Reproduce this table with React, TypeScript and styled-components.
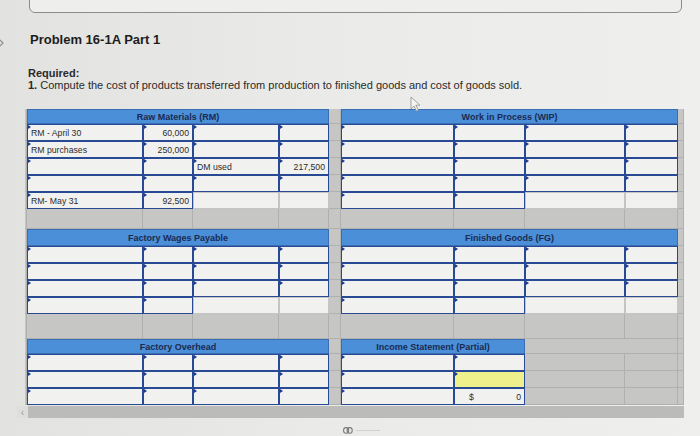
import styled, { createGlobalStyle } from 'styled-components'

const GlobalStyle = createGlobalStyle`
  html, body { margin: 0; padding: 0; }
  body {
    background: #e9e9e7;
    font-family: 'Liberation Sans', Arial, sans-serif;
  }
`

const Page = styled.div`
  position: relative;
  width: 700px;
  height: 436px;
  overflow: hidden;
  display: flex;
  flex-direction: column;
  background: linear-gradient(90deg, #e2e2e0 0%, #eaeae8 45%, #efefed 100%);
`

const TopCard = styled.div`
  margin: -20px 18px 0 29px;
  height: 31px;
  border: 1px solid #8c8c8a;
  border-radius: 0 0 6px 6px;
  background: #eeeeec;
`

const Title = styled.h1`
  margin: 19px 0 0 30px;
  font-size: 13px;
  line-height: 16px;
  font-weight: 700;
  color: #1d1d1d;
`

const Prompt = styled.div`
  margin: 19px 0 0 28px;
  font-size: 11px;
  line-height: 12px;
  color: #2a2a2a;
  b { font-weight: 700; }
`

const Sheet = styled.div`
  margin: 18px 0 0 25px;
  width: 659px;
  display: flex;
  flex-direction: column;
`

const Row = styled.div<{ $h: number }>`
  display: grid;
  grid-template-columns: 2px 116px 50px 86px 50px 12px 113px 71px 100px 53px 6px;
  height: ${p => p.$h}px;
`

const Gray = styled.div<{ $span?: number }>`
  grid-column: span ${p => p.$span ?? 1};
  background: #c6c6c4;
  border-right: 1px solid #b0b0ae;
  border-bottom: 1px solid #b0b0ae;
  box-sizing: border-box;
`

const Head = styled.div<{ $span: number }>`
  grid-column: span ${p => p.$span};
  background: #4b8fd8;
  border: 1px solid #3a6db3;
  box-sizing: border-box;
  display: flex;
  align-items: center;
  justify-content: center;
  font-size: 9px;
  font-weight: 700;
  color: #1a2a50;
`

const Cell = styled.div<{ $kind: string; $num?: boolean }>`
  position: relative;
  box-sizing: border-box;
  display: flex;
  align-items: center;
  justify-content: ${p => (p.$num ? 'flex-end' : 'space-between')};
  padding: 0 3px;
  font-size: 8.7px;
  color: #2c2c2c;
  background: ${p => (p.$kind === 'yellow' ? '#eef08c' : '#f1f1ef')};
  border: 1px solid ${p => (p.$kind === 'plain' ? '#c4c4c2' : '#284a95')};
  ${p => (p.$kind === 'in' || p.$kind === 'yellow') && `
    &::before {
      content: '';
      position: absolute;
      left: 0;
      top: 0;
      border-top: 2px solid transparent;
      border-bottom: 2px solid transparent;
      border-left: 3px solid #1c3b8c;
    }
  `}
`

const Dollar = styled.span`
  margin-left: 11px;
`

const ScrollBar = styled.div`
  display: flex;
  height: 12px;
  margin: 1px 0 0 17px;
  width: 667px;
`

const ScrollBtn = styled.div`
  width: 11px;
  display: flex;
  align-items: center;
  justify-content: center;
  background: #dededc;
  color: #9a9a98;
  font-size: 10px;
`

const Track = styled.div`
  flex: 1;
  background: #bbbbb9;
`

const Footer = styled.div`
  display: flex;
  align-items: center;
  gap: 3px;
  margin: 9px 0 0 343px;
`

const FooterLine = styled.div`
  width: 24px;
  height: 1px;
  background: #d2d2d0;
`

const Cursor = styled.svg`
  position: absolute;
  left: 410px;
  top: 96px;
`

const EdgeMark = styled.svg`
  position: absolute;
  left: -2px;
  top: 38px;
`

type Spec = { k: 'in' | 'plain' | 'gray' | 'yellow' | 'sum'; t?: string }
const I = (t?: string): Spec => ({ k: 'in', t })
const P: Spec = { k: 'plain' }
const G: Spec = { k: 'gray' }

const full = [I(), I(), I(), I()]
const lastRow = [I(), I(), P, P]

function Cells({ list }: { list: Spec[] }) {
  return (
    <>
      {list.map((c, i) => {
        if (c.k === 'gray') return <Gray key={i} />
        if (c.k === 'sum')
          return (
            <Cell key={i} $kind="sum">
              <Dollar>$</Dollar>
              <span>0</span>
            </Cell>
          )
        return (
          <Cell key={i} $kind={c.k} $num={i % 2 === 1}>
            {c.t}
          </Cell>
        )
      })}
    </>
  )
}

function HeadRow({ left, right, rightSpan = 4, h }: { left: string; right: string; rightSpan?: number; h: number }) {
  return (
    <Row $h={h}>
      <Gray />
      <Head $span={4}>{left}</Head>
      <Gray />
      <Head $span={rightSpan}>{right}</Head>
      {rightSpan < 4 && <Gray $span={4 - rightSpan} />}
      <Gray />
    </Row>
  )
}

function DataRow({ left, right }: { left: Spec[]; right: Spec[] }) {
  return (
    <Row $h={17}>
      <Gray />
      <Cells list={left} />
      <Gray />
      <Cells list={right} />
      <Gray />
    </Row>
  )
}

function Spacer({ h }: { h: number }) {
  return (
    <Row $h={h}>
      {Array.from({ length: 11 }).map((_, i) => (
        <Gray key={i} />
      ))}
    </Row>
  )
}

export default function App() {
  return (
    <Page>
      <GlobalStyle />
      <EdgeMark width="7" height="10" viewBox="0 0 7 10">
        <path d="M1 1 L5 5 L1 9" fill="none" stroke="#8a8a88" strokeWidth="1.2" />
      </EdgeMark>
      <TopCard />
      <Title>Problem 16-1A Part 1</Title>
      <Prompt>
        <b>Required:</b>
        <div>
          <b>1.</b> Compute the cost of products transferred from production to finished goods and cost of goods sold.
        </div>
      </Prompt>

      <Sheet>
        <HeadRow h={15} left="Raw Materials (RM)" right="Work in Process (WIP)" />
        <DataRow left={[I('RM - April 30'), I('60,000'), I(), I()]} right={full} />
        <DataRow left={[I('RM purchases'), I('250,000'), I(), I()]} right={full} />
        <DataRow left={[I(), I(), I('DM used'), I('217,500')]} right={full} />
        <DataRow left={full} right={full} />
        <DataRow left={[I('RM- May 31'), I('92,500'), P, P]} right={lastRow} />
        <Spacer h={20} />

        <HeadRow h={17} left="Factory Wages Payable" right="Finished Goods (FG)" />
        <DataRow left={full} right={full} />
        <DataRow left={full} right={full} />
        <DataRow left={full} right={full} />
        <DataRow left={lastRow} right={lastRow} />
        <Spacer h={25} />

        <HeadRow h={15} left="Factory Overhead" right="Income Statement (Partial)" rightSpan={2} />
        <DataRow left={full} right={[I(), I(), G, G]} />
        <DataRow left={full} right={[I(), { k: 'yellow' }, G, G]} />
        <DataRow left={full} right={[I(), { k: 'sum' }, G, G]} />
      </Sheet>

      <ScrollBar>
        <ScrollBtn>‹</ScrollBtn>
        <Track />
      </ScrollBar>

      <Footer>
        <svg width="10" height="7" viewBox="0 0 10 7">
          <rect x="0.6" y="0.6" width="5" height="5.6" rx="2.4" fill="none" stroke="#7a7a78" strokeWidth="1.1" />
          <rect x="4.2" y="0.6" width="5" height="5.6" rx="2.4" fill="none" stroke="#7a7a78" strokeWidth="1.1" />
        </svg>
        <FooterLine />
      </Footer>

      <Cursor width="11" height="16" viewBox="0 0 11 16">
        <path d="M1 1 L1 13 L4 10 L6.5 15 L8.3 14 L5.8 9.2 L10 9.2 Z" fill="#f4f4f2" stroke="#9a9a98" strokeWidth="0.9" />
      </Cursor>
    </Page>
  )
}
